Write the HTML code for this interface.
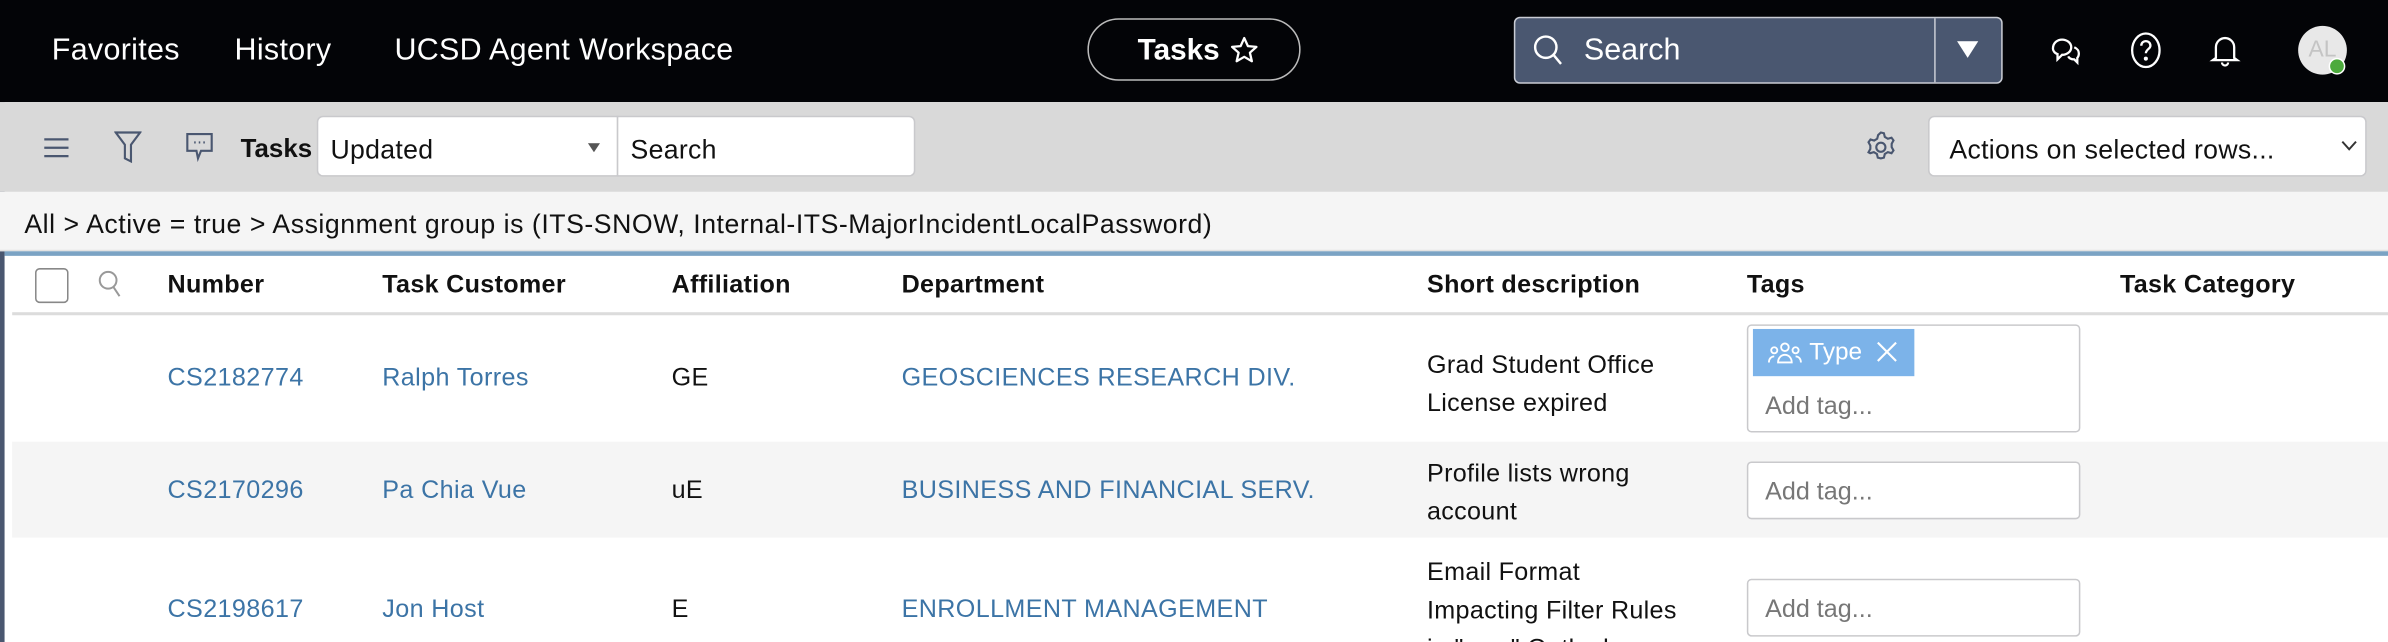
<!DOCTYPE html>
<html><head><meta charset="utf-8"><style>
*{box-sizing:border-box;margin:0;padding:0}
html,body{width:2388px;height:642px;overflow:hidden;background:#fff}
#w{width:1568px;height:422px;transform:scale(1.52296);transform-origin:0 0;position:relative;font-family:"Liberation Sans",sans-serif;color:#111}
.a{position:absolute;white-space:nowrap}
#top{left:0;top:0;width:1568px;height:67px;background:#030407}
.nav{color:#fff;font-size:20px;top:22px;letter-spacing:.2px}
#tb{left:0;top:67px;width:1568px;height:59px;background:#d9d9d9}
#bc{left:0;top:126px;width:1568px;height:39px;background:#f5f5f5;border-bottom:1px solid #e2e2e2}
.h{font-weight:bold;font-size:16.5px;top:178px;letter-spacing:.2px}
.l{color:#3c74a6;font-size:16.5px;letter-spacing:.25px}
.t{font-size:16.5px;letter-spacing:.2px}
.box{background:#fff;border:1.5px solid #c9c9cc;border-radius:3px}
.at{color:#777;font-size:16.5px}
</style></head><body><div id="w">
<div class="a" id="top"></div>
<div class="a" style="left:0;top:67px;width:3px;height:355px;background:#4a5770"></div>
<div class="a nav" style="left:34px">Favorites</div>
<div class="a nav" style="left:154px">History</div>
<div class="a nav" style="left:259px">UCSD Agent Workspace</div>
<div class="a" style="left:714px;top:12px;width:140px;height:41px;border:1.5px solid #bbb;border-radius:21px"></div>
<div class="a" style="left:747px;top:22px;color:#fff;font-weight:bold;font-size:19.5px">Tasks</div>
<svg class="a" style="left:807px;top:23px" width="20" height="20" viewBox="0 0 20 20"><path d="M10 2l2.4 5.3 5.6.5-4.3 3.8 1.3 5.6L10 14.3 5 17.2l1.3-5.6L2 7.8l5.6-.5z" fill="none" stroke="#fff" stroke-width="1.5" stroke-linejoin="round"/></svg>
<div class="a" style="left:994px;top:11px;width:321px;height:44px;background:#4a5770;border:1.5px solid #c9ccd4;border-radius:4px"></div>
<div class="a" style="left:1270px;top:12px;width:1px;height:42px;background:#c9ccd4"></div>
<svg class="a" style="left:1005px;top:21px" width="24" height="24" viewBox="0 0 24 24"><circle cx="10" cy="10" r="7" fill="none" stroke="#fff" stroke-width="1.6"/><path d="M15 15l5 6" stroke="#fff" stroke-width="1.6"/></svg>
<div class="a" style="left:1040px;top:22px;color:#fff;font-size:20px">Search</div>
<svg class="a" style="left:1285px;top:27px" width="14" height="12"><path d="M0 0h14L7 11z" fill="#fff"/></svg>
<svg class="a" style="left:1345px;top:21px" width="24" height="24" viewBox="0 0 24 24" fill="none" stroke="#fff" stroke-width="1.5"><path d="M3 11c0-4 3-6 6-6s6 2 6 5-3 5-6 5l-3 3v-3.5C4 14 3 12 3 11z"/><path d="M13 16c1 2 3 2 4 2l2 2v-3c1-1 1-2 1-3 0-2-1-3-3-4"/></svg>
<svg class="a" style="left:1397px;top:20px" width="24" height="26" viewBox="0 0 24 26" fill="none" stroke="#fff" stroke-width="1.5"><ellipse cx="12" cy="13" rx="9" ry="11"/><path d="M9 10c0-2 1.5-3 3-3s3 1 3 3-3 2.5-3 5"/><circle cx="12" cy="18.5" r=".6" fill="#fff"/></svg>
<svg class="a" style="left:1450px;top:21px" width="22" height="24" viewBox="0 0 22 24" fill="none" stroke="#fff" stroke-width="1.5"><path d="M5 17V10a6 6 0 0112 0v7l2 1.5H3z"/><path d="M9 20a2 2 0 004 0"/></svg>
<div class="a" style="left:1509px;top:17px;width:32px;height:32px;border-radius:50%;background:#e8e8e8;color:#c4c4c4;font-size:15px;text-align:center;line-height:32px">AL</div>
<div class="a" style="left:1529px;top:38px;width:11px;height:11px;border-radius:50%;background:#4caa3c;border:1.5px solid #fff"></div>

<div class="a" id="tb"></div>
<svg class="a" style="left:29px;top:90px" width="16" height="14"><path d="M0 1.5h16M0 7h16M0 12.5h16" stroke="#4a5770" stroke-width="1.5"/></svg>
<svg class="a" style="left:75px;top:86px" width="18" height="22" viewBox="0 0 18 22" fill="none" stroke="#4a5770" stroke-width="1.4"><path d="M1 1h16l-6 8v11l-4-2V9z"/></svg>
<svg class="a" style="left:122px;top:87px" width="18" height="20" viewBox="0 0 18 20" fill="none" stroke="#4a5770" stroke-width="1.4"><path d="M1 1h16v11H10l-2 5-1-5H1z"/><path d="M5.5 6.5h1M8.5 6.5h1M11.5 6.5h1"/></svg>
<div class="a" style="left:158px;top:88px;font-weight:bold;font-size:17px">Tasks</div>
<div class="a box" style="left:208px;top:76px;width:198px;height:40px;border-radius:4px 0 0 4px"></div>
<div class="a t" style="left:217px;top:88px;font-size:17.5px">Updated</div>
<svg class="a" style="left:386px;top:94px" width="8" height="6"><path d="M0 0h8L4 6z" fill="#555"/></svg>
<div class="a box" style="left:405px;top:76px;width:196px;height:40px;border-radius:0 4px 4px 0"></div>
<div class="a t" style="left:414px;top:88px;font-size:17.5px">Search</div>
<svg class="a" style="left:1224px;top:85px" width="22" height="24" viewBox="0 0 22 24" fill="none" stroke="#4a5770" stroke-width="1.4"><path d="M11 2l2 .5.6 2.4 2 1.2 2.4-.7 1.3 1.8-1.2 2.2v2.2l1.2 2.2-1.3 1.8-2.4-.7-2 1.2-.6 2.4-2 .5-2-.5-.6-2.4-2-1.2-2.4.7L2.9 15l1.2-2.2v-2.2L2.9 8.4l1.3-1.8 2.4.7 2-1.2.6-2.4z"/><circle cx="11" cy="11.7" r="3"/></svg>
<div class="a box" style="left:1266px;top:76px;width:288px;height:40px;border-radius:4px"></div>
<div class="a t" style="left:1280px;top:88px;font-size:17.5px">Actions on selected rows...</div>
<svg class="a" style="left:1537px;top:92px" width="11" height="8"><path d="M1 1l4.5 5L10 1" stroke="#333" stroke-width="1.3" fill="none"/></svg>

<div class="a" id="bc"></div>
<div class="a t" style="left:16px;top:137px;font-size:17.5px;letter-spacing:.35px">All &gt; Active = true &gt; Assignment group is (ITS-SNOW, Internal-ITS-MajorIncidentLocalPassword)</div>
<div class="a" style="left:3px;top:165px;width:1565px;height:3px;background:#7ba3c4"></div>

<div class="a" style="left:23px;top:176px;width:22px;height:23px;border:1.5px solid #888;border-radius:3px"></div>
<svg class="a" style="left:64px;top:177px" width="18" height="20" viewBox="0 0 18 20" fill="none" stroke="#999" stroke-width="1.3"><circle cx="7" cy="7" r="5.5"/><path d="M10.5 11.5l4 6"/></svg>
<div class="a h" style="left:110px">Number</div>
<div class="a h" style="left:251px">Task Customer</div>
<div class="a h" style="left:441px">Affiliation</div>
<div class="a h" style="left:592px">Department</div>
<div class="a h" style="left:937px">Short description</div>
<div class="a h" style="left:1147px">Tags</div>
<div class="a h" style="left:1392px">Task Category</div>
<div class="a" style="left:8px;top:205px;width:1560px;height:2px;background:#dcdcdc"></div>

<div class="a l" style="left:110px;top:239px">CS2182774</div>
<div class="a l" style="left:251px;top:239px">Ralph Torres</div>
<div class="a t" style="left:441px;top:239px">GE</div>
<div class="a l" style="left:592px;top:239px">GEOSCIENCES RESEARCH DIV.</div>
<div class="a t" style="left:937px;top:228px;line-height:25px">Grad Student Office<br>License expired</div>
<div class="a box" style="left:1147px;top:213px;width:219px;height:71px"></div>
<div class="a" style="left:1151px;top:216px;width:106px;height:31px;background:#7cb3e9"></div>
<svg class="a" style="left:1160px;top:224px" width="24" height="16" viewBox="0 0 24 16" fill="none" stroke="#fff" stroke-width="1.2"><circle cx="12" cy="4" r="2.5"/><circle cx="5" cy="6" r="2"/><circle cx="19" cy="6" r="2"/><path d="M7.5 14c0-3 2-5 4.5-5s4.5 2 4.5 5zM1.5 14c0-2.5 1.5-4 3.5-4M22.5 14c0-2.5-1.5-4-3.5-4"/></svg>
<div class="a" style="left:1188px;top:223px;color:#fff;font-size:16px">Type</div>
<svg class="a" style="left:1232px;top:224px" width="14" height="14"><path d="M1 1l12 12M13 1L1 13" stroke="#fff" stroke-width="1.4"/></svg>
<div class="a at" style="left:1159px;top:258px">Add tag...</div>

<div class="a" style="left:8px;top:290px;width:1560px;height:63px;background:#f5f5f5"></div>
<div class="a l" style="left:110px;top:313px">CS2170296</div>
<div class="a l" style="left:251px;top:313px">Pa Chia Vue</div>
<div class="a t" style="left:441px;top:313px">uE</div>
<div class="a l" style="left:592px;top:313px">BUSINESS AND FINANCIAL SERV.</div>
<div class="a t" style="left:937px;top:299px;line-height:25px">Profile lists wrong<br>account</div>
<div class="a box" style="left:1147px;top:303px;width:219px;height:38px"></div>
<div class="a at" style="left:1159px;top:314px">Add tag...</div>

<div class="a l" style="left:110px;top:391px">CS2198617</div>
<div class="a l" style="left:251px;top:391px">Jon Host</div>
<div class="a t" style="left:441px;top:391px">E</div>
<div class="a l" style="left:592px;top:391px">ENROLLMENT MANAGEMENT</div>
<div class="a t" style="left:937px;top:364px;line-height:25px">Email Format<br>Impacting Filter Rules<br>in "new" Outlook</div>
<div class="a box" style="left:1147px;top:380px;width:219px;height:38px"></div>
<div class="a at" style="left:1159px;top:391px">Add tag...</div>
</div></body></html>
